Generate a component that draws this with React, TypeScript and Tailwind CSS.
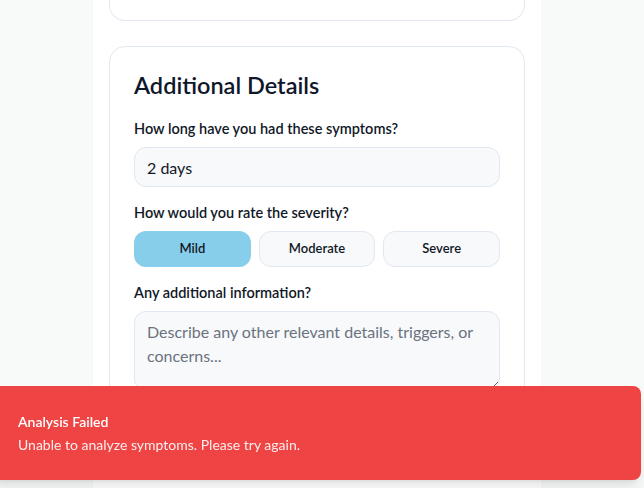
import React, { useState } from 'react';

const severities = ['Mild', 'Moderate', 'Severe'];

const App = () => {
  const [duration, setDuration] = useState('2 days');
  const [severity, setSeverity] = useState('Mild');
  const [notes, setNotes] = useState('');

  return (
    <div
      className="min-h-screen bg-[#f8fafa] pr-[10px]"
      style={{ fontFamily: 'Lato, "Noto Sans", sans-serif' }}
    >
      <main className="mx-auto w-[448px] bg-white px-4 min-h-screen flex flex-col gap-[25px]">
        {/* bottom of the previous card, scrolled out of view */}
        <div className="h-[21px] rounded-b-2xl border border-t-0 border-[#e2e8f0] bg-white" />

        <section className="rounded-2xl border border-[#e2e8f0] bg-white p-6 flex flex-col gap-4">
          <h2 className="text-[23.5px] font-semibold text-[#0f172a] leading-[28px] pb-1">Additional Details</h2>

          <div>
            <label className="block text-[14.5px] leading-5 font-semibold text-[#111827] mb-2">
              How long have you had these symptoms?
            </label>
            <input
              value={duration}
              onChange={(e) => setDuration(e.target.value)}
              className="w-full h-10 rounded-xl border border-[#e2e8f0] bg-[#f7f9fa] px-3 text-base text-[#111827] outline-none"
            />
          </div>

          <div>
            <label className="block text-[14.5px] leading-5 font-semibold text-[#111827] mb-2">
              How would you rate the severity?
            </label>
            <div className="grid grid-cols-3 gap-2">
              {severities.map((s) => (
                <button
                  key={s}
                  onClick={() => setSeverity(s)}
                  className={
                    severity === s
                      ? 'h-9 rounded-xl bg-[#87ceeb] text-[13px] font-semibold text-[#111827]'
                      : 'h-9 rounded-xl border border-[#e2e8f0] bg-[#f7f9fa] text-[13px] font-semibold text-[#111827]'
                  }
                >
                  {s}
                </button>
              ))}
            </div>
          </div>

          <div>
            <label className="block text-[14.5px] leading-5 font-semibold text-[#111827] mb-2">
              Any additional information?
            </label>
            <textarea
              value={notes}
              onChange={(e) => setNotes(e.target.value)}
              placeholder="Describe any other relevant details, triggers, or concerns..."
              className="w-full h-[80px] rounded-xl border border-[#e2e8f0] bg-[#f7f9fa] px-3 py-2 text-base leading-6 text-[#111827] placeholder:text-[#6b7280] outline-none"
            />
          </div>
        </section>
      </main>

      <div className="fixed left-[-12px] right-[3px] bottom-2 h-[94px] rounded-lg bg-[#ef4444] pl-[30px] flex flex-col justify-center gap-[3px] shadow-lg">
        <div className="text-sm font-semibold text-white leading-5">Analysis Failed</div>
        <div className="text-sm text-white/90 leading-5">Unable to analyze symptoms. Please try again.</div>
      </div>
    </div>
  );
};

export default App;
